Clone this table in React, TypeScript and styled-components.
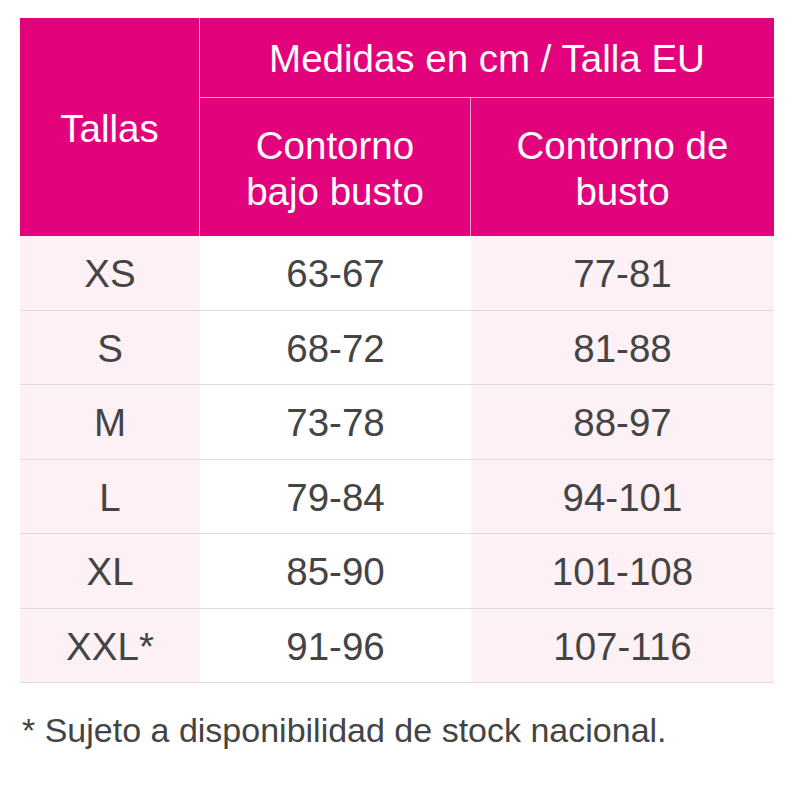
import React from "react";
import styled, { createGlobalStyle } from "styled-components";

const Global = createGlobalStyle`
  html, body { margin: 0; padding: 0; background: #ffffff; }
  body { font-family: "Liberation Sans", Arial, sans-serif; }
`;

const Page = styled.div`
  padding: 18px 26px 0 20px;
  width: 800px;
  box-sizing: border-box;
`;

const Table = styled.div`
  display: grid;
  grid-template-columns: 180px 271px 303px;
  width: 754px;
`;

const HeadCell = styled.div<{ $rowSpan?: number; $colSpan?: number; $h?: number; $right?: boolean; $bottom?: boolean }>`
  background: #e2027b;
  color: #ffffff;
  display: flex;
  align-items: center;
  justify-content: center;
  text-align: center;
  font-size: 38.5px;
  line-height: 46px;
  padding-top: 3px;
  box-sizing: border-box;
  ${(p) => (p.$rowSpan ? `grid-row: span ${p.$rowSpan};` : "")}
  ${(p) => (p.$colSpan ? `grid-column: span ${p.$colSpan};` : "")}
  ${(p) => (p.$h ? `height: ${p.$h}px;` : "")}
  ${(p) => (p.$right ? "border-right: 1px solid #f5a3cc;" : "")}
  ${(p) => (p.$bottom ? "border-bottom: 1px solid #f5a3cc;" : "")}
`;

const Cell = styled.div<{ $tint: boolean }>`
  background: ${(p) => (p.$tint ? "#fdf1f6" : "#ffffff")};
  color: #444444;
  height: 74.5px;
  padding-top: 3px;
  border-bottom: 1px solid #dddddd;
  box-sizing: border-box;
  display: flex;
  align-items: center;
  justify-content: center;
  font-size: 38.5px;
`;

const Note = styled.p`
  margin: 28px 0 0 2px;
  color: #444444;
  font-size: 34px;
`;

const rows = [
  ["XS", "63-67", "77-81"],
  ["S", "68-72", "81-88"],
  ["M", "73-78", "88-97"],
  ["L", "79-84", "94-101"],
  ["XL", "85-90", "101-108"],
  ["XXL*", "91-96", "107-116"],
];

export default function App() {
  return (
    <>
      <Global />
      <Page>
        <Table>
          <HeadCell $rowSpan={2} $right>
            Tallas
          </HeadCell>
          <HeadCell $colSpan={2} $h={80} $bottom>
            Medidas en cm / Talla EU
          </HeadCell>
          <HeadCell $h={138} $right>
            Contorno
            <br />
            bajo busto
          </HeadCell>
          <HeadCell $h={138}>
            Contorno de
            <br />
            busto
          </HeadCell>
          {rows.map((r) =>
            r.map((v, i) => (
              <Cell key={r[0] + i} $tint={i !== 1}>
                {v}
              </Cell>
            ))
          )}
        </Table>
        <Note>* Sujeto a disponibilidad de stock nacional.</Note>
      </Page>
    </>
  );
}
